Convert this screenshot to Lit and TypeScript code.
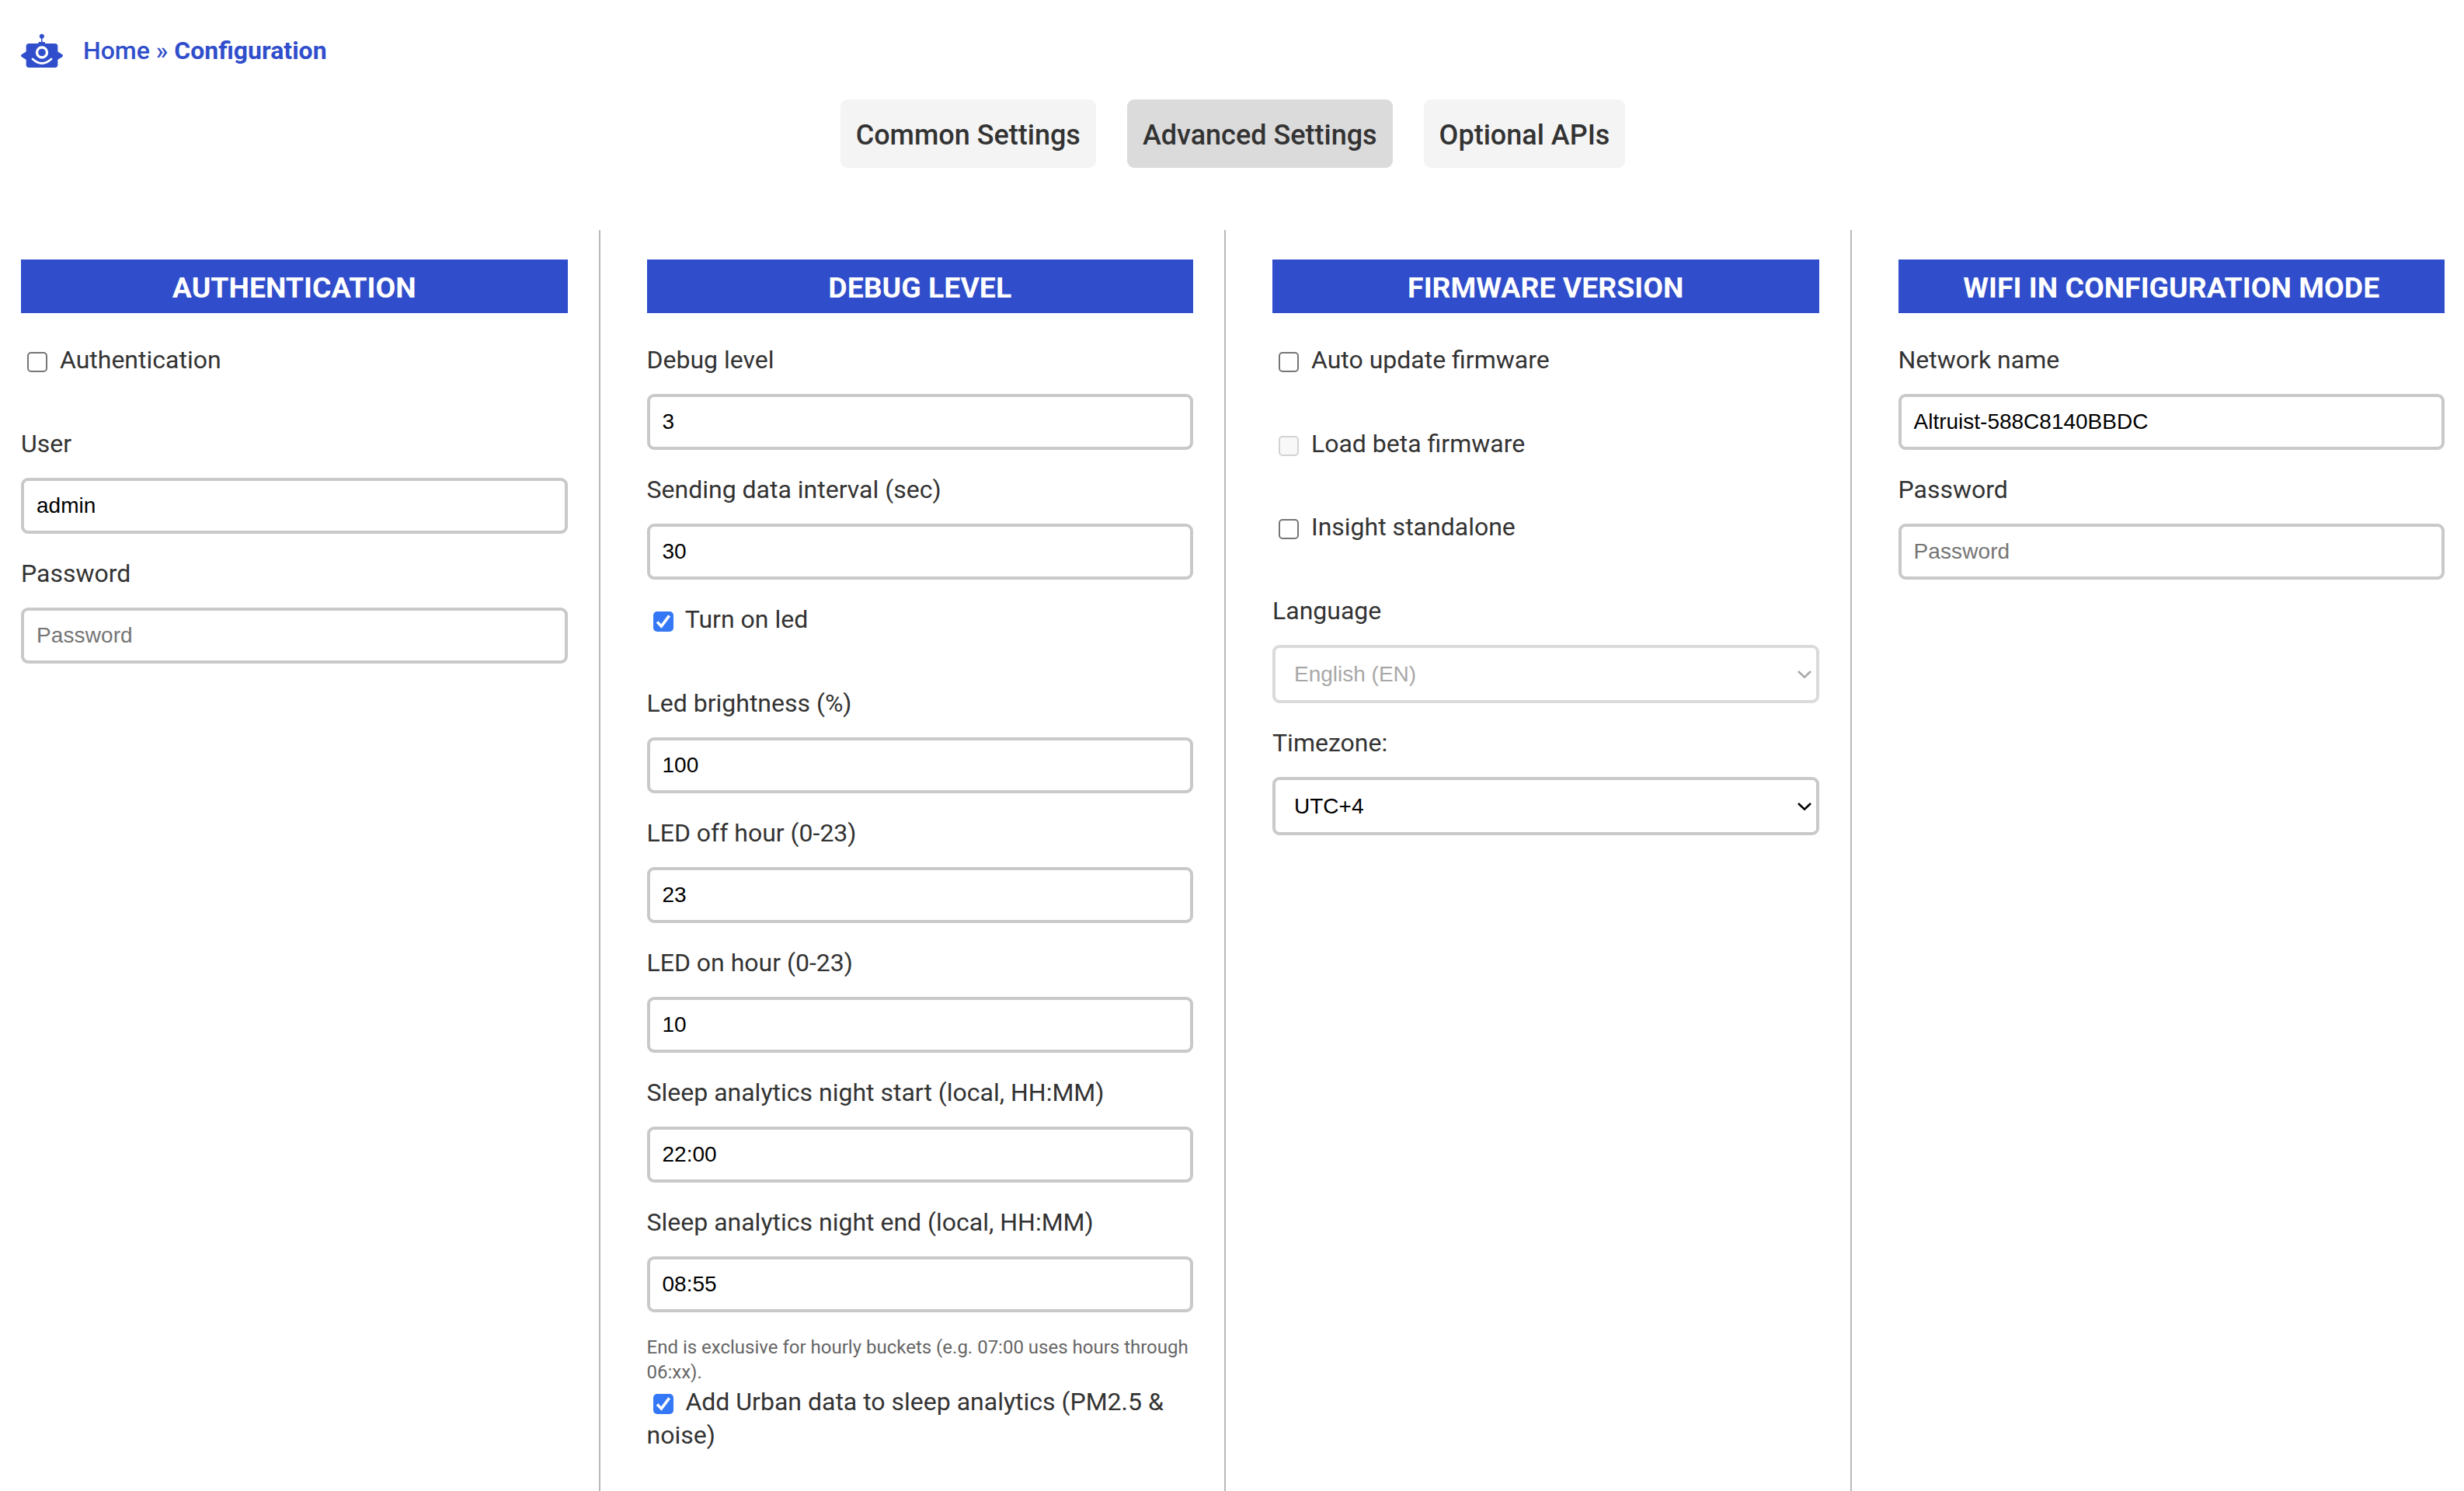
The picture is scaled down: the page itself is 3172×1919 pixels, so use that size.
import { LitElement, html, css, nothing, type TemplateResult } from "lit";
import { customElement, property } from "lit/decorators.js";
import { classMap } from "lit/directives/class-map.js";

type Item =
  | { kind: "text"; label: string; value?: string; placeholder?: string; password?: boolean }
  | { kind: "check"; label: string; checked?: boolean; disabled?: boolean; flush?: boolean }
  | { kind: "select"; label: string; value: string; disabled?: boolean }
  | { kind: "hint"; label: string };

interface Section {
  title: string;
  items: Item[];
}

const TABS = ["Common Settings", "Advanced Settings", "Optional APIs"];
const ACTIVE_TAB = "Advanced Settings";

const SECTIONS: Section[] = [
  {
    title: "Authentication",
    items: [
      { kind: "check", label: "Authentication" },
      { kind: "text", label: "User", value: "admin" },
      { kind: "text", label: "Password", placeholder: "Password", password: true },
    ],
  },
  {
    title: "Debug level",
    items: [
      { kind: "text", label: "Debug level", value: "3" },
      { kind: "text", label: "Sending data interval (sec)", value: "30" },
      { kind: "check", label: "Turn on led", checked: true },
      { kind: "text", label: "Led brightness (%)", value: "100" },
      { kind: "text", label: "LED off hour (0-23)", value: "23" },
      { kind: "text", label: "LED on hour (0-23)", value: "10" },
      { kind: "text", label: "Sleep analytics night start (local, HH:MM)", value: "22:00" },
      { kind: "text", label: "Sleep analytics night end (local, HH:MM)", value: "08:55" },
      { kind: "hint", label: "End is exclusive for hourly buckets (e.g. 07:00 uses hours through 06:xx)." },
      { kind: "check", label: "Add Urban data to sleep analytics (PM2.5 & noise)", checked: true, flush: true },
    ],
  },
  {
    title: "Firmware version",
    items: [
      { kind: "check", label: "Auto update firmware" },
      { kind: "check", label: "Load beta firmware", disabled: true },
      { kind: "check", label: "Insight standalone" },
      { kind: "select", label: "Language", value: "English (EN)", disabled: true },
      { kind: "select", label: "Timezone:", value: "UTC+4" },
    ],
  },
  {
    title: "WiFi in configuration mode",
    items: [
      { kind: "text", label: "Network name", value: "Altruist-588C8140BBDC" },
      { kind: "text", label: "Password", placeholder: "Password", password: true },
    ],
  },
];

@customElement("config-section")
class ConfigSection extends LitElement {
  @property({ attribute: false }) section!: Section;

  static styles = css`
    :host {
      display: block;
      min-width: 0;
    }
    .title {
      margin: 0 0 39px;
      padding: 11px 0 7px;
      background: #304ecb;
      color: #fff;
      font-size: 37.44px;
      font-weight: 700;
      line-height: 51px;
      text-align: center;
      text-transform: uppercase;
    }
    .field {
      display: flex;
      flex-direction: column;
      gap: 22px;
      margin-bottom: 29.8px;
    }
    .label {
      line-height: 43.2px;
    }
    .box,
    .select {
      box-sizing: border-box;
      width: 100%;
      margin: 0;
      border: 4px solid #c9c9c9;
      border-radius: 9px;
      background: #fff;
      color: #000;
      font: 28px "Liberation Sans", Arial, sans-serif;
      outline: none;
    }
    .box {
      height: 72px;
      padding: 0 16px;
    }
    .box::placeholder {
      color: #757575;
      opacity: 1;
      letter-spacing: 0.1px;
    }
    .select-wrap {
      display: grid;
      align-items: center;
    }
    .select {
      grid-area: 1 / 1;
      height: 75px;
      padding: 0 24px;
      appearance: none;
    }
    .select:disabled {
      border-color: #dadada;
      color: #a8a8a8;
      opacity: 1;
    }
    .chevron {
      grid-area: 1 / 1;
      justify-self: end;
      width: 18px;
      height: 10px;
      margin-right: 10px;
      fill: none;
      stroke: #000;
      stroke-width: 2.6;
      pointer-events: none;
    }
    .chevron.off {
      stroke: #a8a8a8;
    }
    .check-row {
      margin-bottom: 64.5px;
      line-height: 43.2px;
    }
    .check-row.flush {
      margin-bottom: 0;
    }
    .check {
      display: inline-block;
      box-sizing: border-box;
      width: 26px;
      height: 26px;
      margin: 0 8px;
      border: 2px solid #767676;
      border-radius: 5px;
      background: #fff;
      vertical-align: -5px;
    }
    .check.on {
      border: 0;
      background: #3478f6;
    }
    .check.off {
      border-color: #d3d3d3;
      background: #f8f8f8;
    }
    .tick {
      display: block;
      width: 26px;
      height: 26px;
      fill: none;
      stroke: #fff;
      stroke-width: 3.6;
    }
    .hint {
      margin: -1px 0 0.5px;
      color: #666;
      font-size: 24px;
      line-height: 32.4px;
    }
  `;

  private renderItem(item: Item): TemplateResult {
    switch (item.kind) {
      case "text":
        return html`<div class="field">
          <label class="label">${item.label}</label>
          <input
            class="box"
            type=${item.password ? "password" : "text"}
            .value=${item.value ?? ""}
            placeholder=${item.placeholder ?? nothing}
          />
        </div>`;
      case "check":
        return html`<div class=${classMap({ "check-row": true, flush: !!item.flush })}>
          <span
            class=${classMap({ check: true, on: !!item.checked, off: !!item.disabled })}
            role="checkbox"
            aria-checked=${item.checked ? "true" : "false"}
            >${item.checked
              ? html`<svg class="tick" viewBox="0 0 26 26"><path d="M5 13.6 L10.4 19 L20.6 5.4" /></svg>`
              : nothing}</span
          >
          <label>${item.label}</label>
        </div>`;
      case "select":
        return html`<div class="field">
          <label class="label">${item.label}</label>
          <div class="select-wrap">
            <select class="select" ?disabled=${item.disabled}>
              <option>${item.value}</option>
            </select>
            <svg class=${classMap({ chevron: true, off: !!item.disabled })} viewBox="0 0 18 10">
              <path d="M1 1 L9 8.6 L17 1" />
            </svg>
          </div>
        </div>`;
      case "hint":
        return html`<p class="hint">${item.label}</p>`;
    }
  }

  render() {
    return html`<h3 class="title">${this.section.title}</h3>
      ${this.section.items.map((i) => this.renderItem(i))}`;
  }
}

@customElement("app-root")
class AppRoot extends LitElement {
  static styles = css`
    :host {
      display: flex;
      flex-direction: column;
      box-sizing: border-box;
      height: 1919px;
      overflow: hidden;
      background: #fff;
      color: #333;
      font: 32px Roboto, Arial, sans-serif;
    }
    .crumbs {
      display: flex;
      align-items: center;
      gap: 26px;
      height: 128px;
      box-sizing: border-box;
      padding: 2px 0 0 27px;
      color: #304ecb;
      font-weight: 500;
    }
    .logo {
      width: 54px;
      height: 45px;
    }
    .crumbs b {
      font-weight: 700;
    }
    .tabs {
      display: flex;
      justify-content: center;
      gap: 40px;
      height: 88px;
      margin-bottom: 80px;
      padding-left: 2px;
    }
    .tab {
      display: flex;
      align-items: center;
      padding: 3px 20px 0;
      border-radius: 9px;
      background: #f4f4f4;
      font-size: 36px;
      font-weight: 500;
    }
    .tab.active {
      background: #dbdbdb;
    }
    .columns {
      display: flex;
      flex: 1;
      gap: 40px;
      min-height: 0;
      padding: 0 25px 0 27px;
    }
    .column {
      flex: 1 1 0;
      min-width: 0;
      padding-top: 38px;
    }
    .column + .column {
      padding-left: 60px;
      border-left: 2px solid #b9b9b9;
    }
  `;

  render() {
    return html`
      <nav class="crumbs">
        <svg class="logo" viewBox="21 36 162 135">
          <g fill="#304ecb">
            <circle cx="101.500" cy="47.500" r="9" />
            <rect x="99" y="50" width="4.500" height="24" />
            <path d="M88 76 V72 Q88 69 91 69 H111 Q114 69 114 72 V76 Z" />
            <rect x="41" y="75" width="122" height="93" rx="11" />
            <path d="M42 106 L24 117 Q18 122 24 127 L42 138 Z" />
            <path d="M162 106 L180 117 Q186 122 180 127 L162 138 Z" />
          </g>
          <circle cx="102" cy="109.500" r="19.500" fill="none" stroke="#fff" stroke-width="10" />
          <path d="M66 135 Q102 168 138 135" fill="none" stroke="#fff" stroke-width="8" stroke-linecap="round" />
        </svg>
        <span>Home » <b>Configuration</b></span>
      </nav>
      <div class="tabs">
        ${TABS.map((t) => html`<div class=${classMap({ tab: true, active: t === ACTIVE_TAB })}>${t}</div>`)}
      </div>
      <main class="columns">
        ${SECTIONS.map((s) => html`<div class="column"><config-section .section=${s}></config-section></div>`)}
      </main>
    `;
  }
}
